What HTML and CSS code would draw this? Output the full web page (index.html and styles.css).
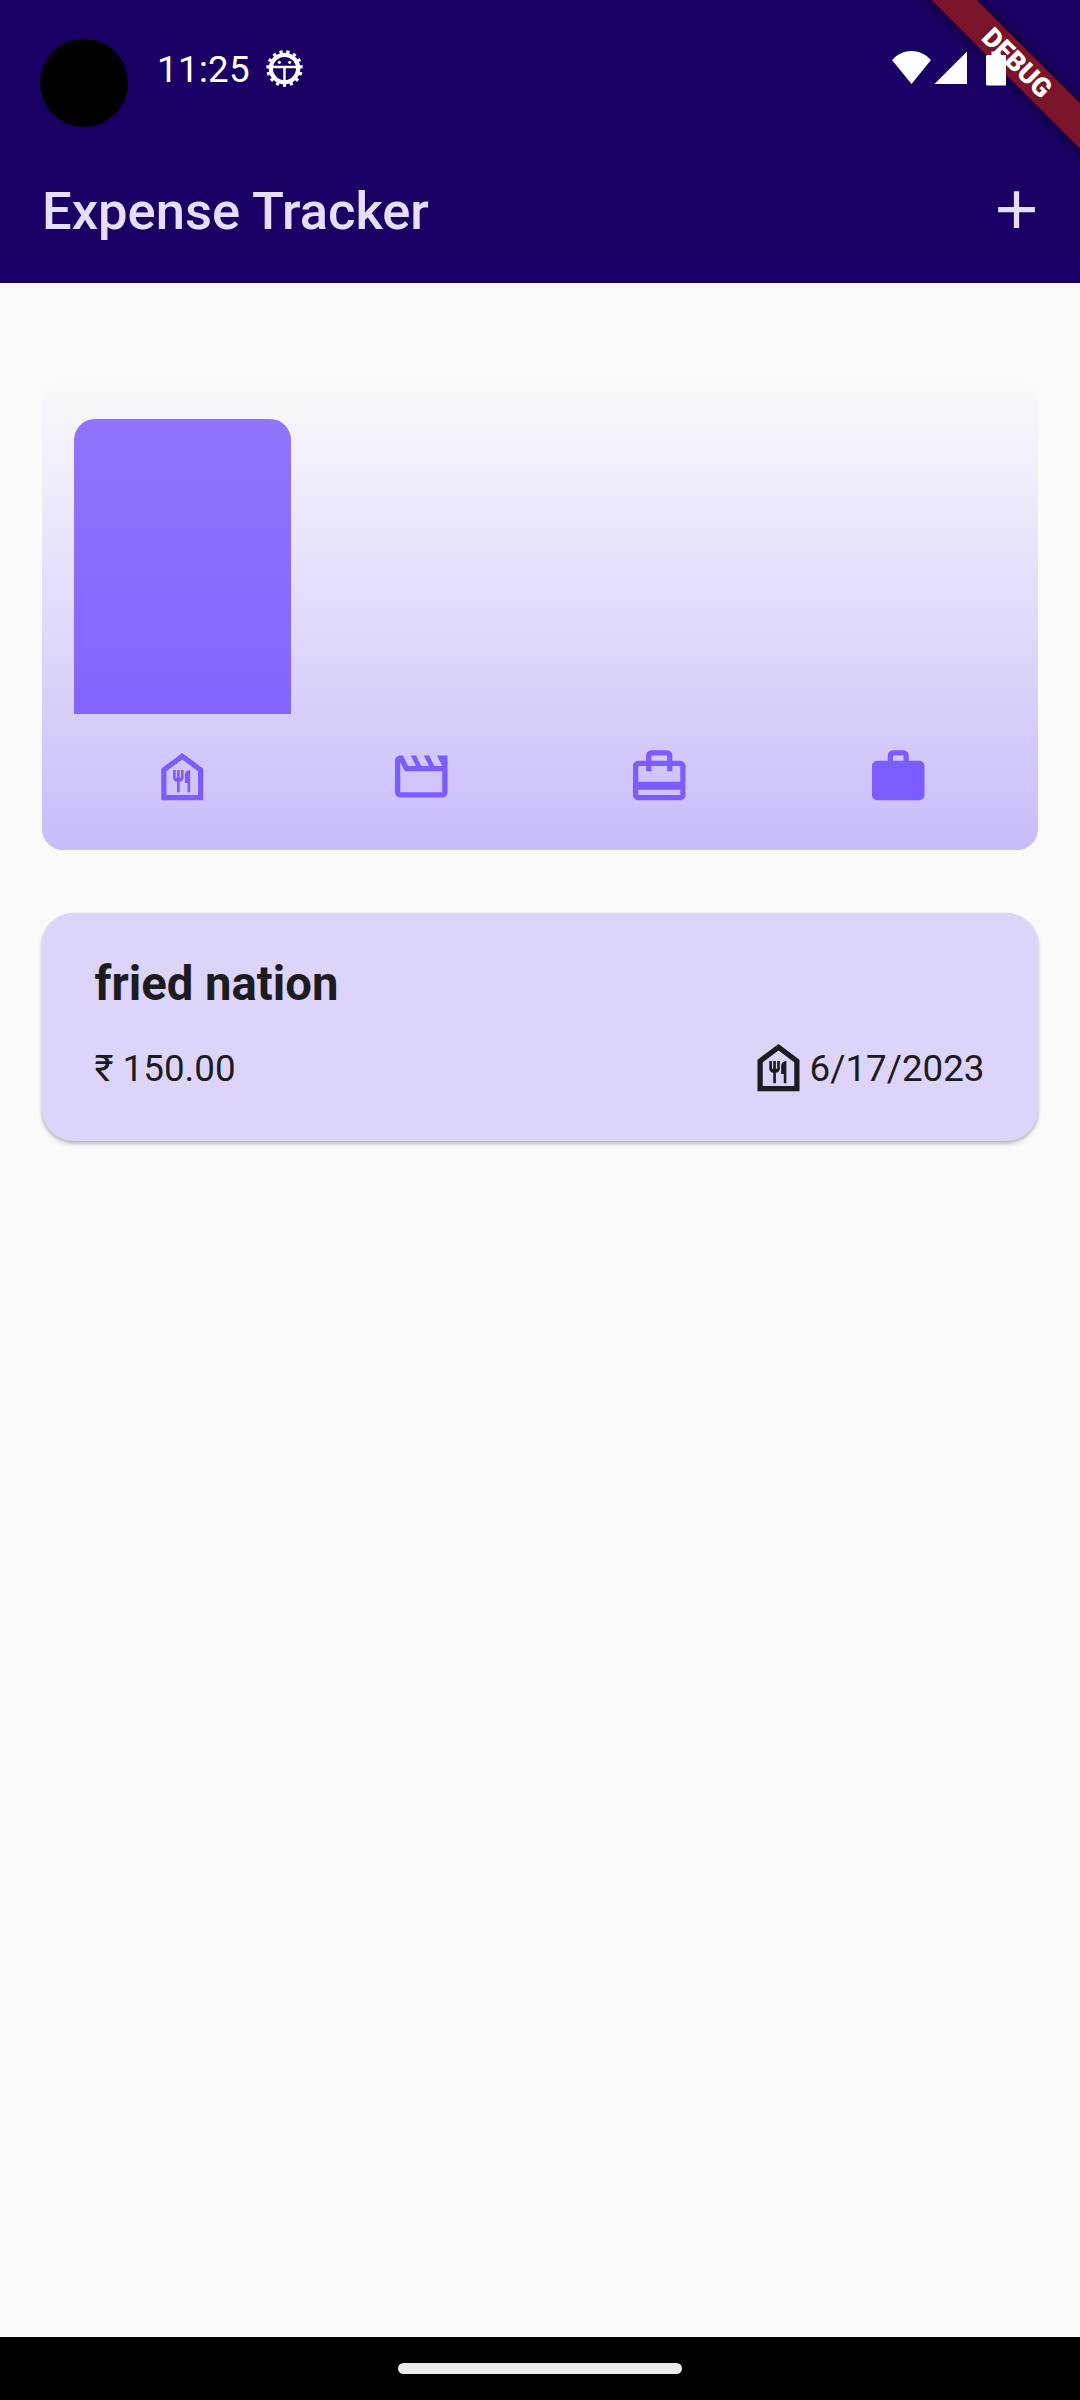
FILE: index.html
```html
<!DOCTYPE html>
<html lang="en">
<head>
<meta charset="utf-8">
<title>Expense Tracker</title>
<link rel="stylesheet" href="styles.css">
</head>
<body>
<svg class="defs" width="0" height="0">
  <symbol id="food" viewBox="0 0 24 24"><path d="M12 5.500l6 4.500v9H6v-9l6-4.500M12 3L4 9v12h16V9l-8-6zm-.5 6.500v3H11v-3h-1v3h-.5v-3h-1v3c0 .83.67 1.500 1.500 1.500v4h1v-4c.83 0 1.500-.67 1.500-1.500v-3h-1zM13 11.500v3h1V18h1V9.500c-1.100 0-2 .9-2 2z"/></symbol>
</svg>
<div class="screen">
  <header class="header">
    <div class="status">
      <div class="camera"></div>
      <span class="time">11:25</span>
      <svg class="gear" viewBox="-18 -18 36 36">
        <circle r="13.300" fill="none" stroke="#fff" stroke-width="4.200"/>
        <circle r="16.200" fill="none" stroke="#fff" stroke-width="3.200" pathLength="150" stroke-dasharray="4.600 5.400" stroke-dashoffset="-35.200"/>
        <path d="M-12-1.400h24M0-1.400V13" stroke="#fff" stroke-width="2.400"/>
        <circle cx="-5" cy="-6" r="1.500" fill="#fff"/><circle cx="5" cy="-6" r="1.500" fill="#fff"/>
      </svg>
      <svg class="system" viewBox="0 0 114 36">
        <path d="M0 9C11-3 28-3 39 9L19.500 33z"/>
        <path d="M42.500 33L75 0.500V33z"/>
        <path d="M99.500 0.500h9V4h4.200q1.500 0 1.500 1.500V33q0 1.500-1.500 1.500H95.500Q94 34.500 94 33V5.500Q94 4 95.500 4h4z"/>
      </svg>
    </div>
    <div class="appbar">
      <h1 class="title">Expense Tracker</h1>
      <svg class="add" viewBox="0 0 24 24"><path d="M19 13h-6v6h-2v-6H5v-2h6V5h2v6h6v2z"/></svg>
    </div>
    <div class="corner"><div class="debug">DEBUG</div></div>
  </header>
  <main class="content">
    <section class="chart">
      <div class="bars"><div class="bar" style="height:100%"></div><div class="bar" style="height:0"></div><div class="bar" style="height:0"></div><div class="bar" style="height:0"></div></div>
      <div class="categories">
        <svg class="icon"><use href="#food"/></svg>
        <svg class="icon" viewBox="0 0 24 24"><path d="M4 6.470L5.760 10H20v8H4V6.470M22 4h-4l2 4h-3l-2-4h-2l2 4h-3l-2-4H8l2 4H7L5 4H4c-1.100 0-1.990.9-1.990 2L2 18c0 1.100.9 2 2 2h16c1.100 0 2-.9 2-2V4z"/></svg>
        <svg class="icon" viewBox="0 0 24 24"><path d="M20 6h-3V4c0-1.110-.89-2-2-2H9c-1.110 0-2 .89-2 2v2H4c-1.110 0-2 .89-2 2v11c0 1.110.89 2 2 2h16c1.110 0 2-.89 2-2V8c0-1.110-.89-2-2-2zM9 4h6v2H9V4zm11 15H4v-2h16v2zm0-5H4V8h3v2h2V8h6v2h2V8h3v6z"/></svg>
        <svg class="icon" viewBox="0 0 24 24"><path d="M20 6h-4V4c0-1.110-.89-2-2-2h-4c-1.110 0-2 .89-2 2v2H4c-1.110 0-2 .89-2 2v11c0 1.110.89 2 2 2h16c1.110 0 2-.89 2-2V8c0-1.110-.89-2-2-2zm-6 0h-4V4h4v2z"/></svg>
      </div>
    </section>
    <article class="card">
      <h2 class="name">fried nation</h2>
      <div class="details">
        <span>₹ 150.00</span>
        <span class="when"><svg class="icon"><use href="#food"/></svg><span>6/17/2023</span></span>
      </div>
    </article>
  </main>
  <footer class="nav"><div class="pill"></div></footer>
</div>
</body>
</html>
```
FILE: styles.css
```css
* { box-sizing: border-box; }
body { margin: 0; font-family: Roboto, sans-serif; background: #fafafa; }
.defs { display: block; }
.screen { width: 1080px; height: 2400px; display: flex; flex-direction: column; background: #fafafa; overflow: hidden; }
.header { position: relative; height: 283px; background: #1a0064; flex: none; }
.status { height: 136px; display: flex; align-items: flex-start; padding: 39px 74px 0 40px; }
.camera { width: 88px; height: 88px; border-radius: 50%; background: #000; }
.time { margin: 9px 0 0 29px; font-size: 36.75px; line-height: 43px; letter-spacing: .3px; color: #fff; width: 108.5px; white-space: nowrap; }
.gear { width: 37px; height: 37px; margin-top: 10.5px; }
.system { width: 114px; height: 36px; margin: 12px 0 0 auto; fill: #fff; position: relative; z-index: 2; }
.appbar { height: 147px; display: flex; align-items: center; justify-content: space-between; padding: 0 32px 0 42px; }
.title { margin: 0; padding-top: 2px; font-size: 52.5px; font-weight: 500; color: #e6deff; line-height: 62px; }
.add { width: 63px; height: 63px; fill: #e6deff; }
.corner { position: absolute; top: 0; right: 0; width: 240px; height: 240px; overflow: hidden; }
.debug { position: absolute; left: 27px; top: 47px; width: 300px; height: 32px; transform: rotate(45deg); background: #7a1428; box-shadow: 0 0 16px rgba(0, 0, 0, .5); color: #fff; font-size: 26.8px; line-height: 32px; font-weight: 900; text-align: center; }
.content { flex: 1; padding: 94.5px 42px 0; }
.chart { height: 472.5px; border-radius: 21px; background: linear-gradient(to top, #c8bcfa, rgba(200, 188, 250, 0)); padding: 41.5px 21px; display: flex; flex-direction: column; }
.bars { height: 294.5px; display: flex; align-items: flex-end; }
.bar { flex: 1; margin: 0 10.5px; border-radius: 21px 21px 0 0; background: linear-gradient(#9074fc, #8466ff); }
.categories { margin-top: 31.5px; display: flex; }
.icon { width: 63px; height: 63px; fill: #7c5cff; }
.categories .icon { flex: 1; }
.card { margin-top: 63px; height: 228px; border-radius: 31.5px; background: #dcd4f9; padding: 43px 52.5px; color: #1c1b1f; box-shadow: 0 3px 4px rgba(0, 0, 0, .22), 0 1px 3px rgba(0, 0, 0, .1); }
.name { margin: 0; font-size: 47.25px; line-height: 56px; font-weight: 700; }
.details { margin-top: 24px; display: flex; justify-content: space-between; align-items: center; font-size: 36.75px; line-height: 43px; }
.details span { padding-top: 1px; }
.when { display: flex; align-items: center; }
.details .when { padding: 0; }
.when .icon { fill: #1c1b1f; }
.when span { padding-right: 1px; }
.nav { height: 63px; background: #000; display: flex; justify-content: center; padding-top: 26px; }
.pill { width: 284px; height: 11px; border-radius: 5.5px; background: #ebebeb; }
```
